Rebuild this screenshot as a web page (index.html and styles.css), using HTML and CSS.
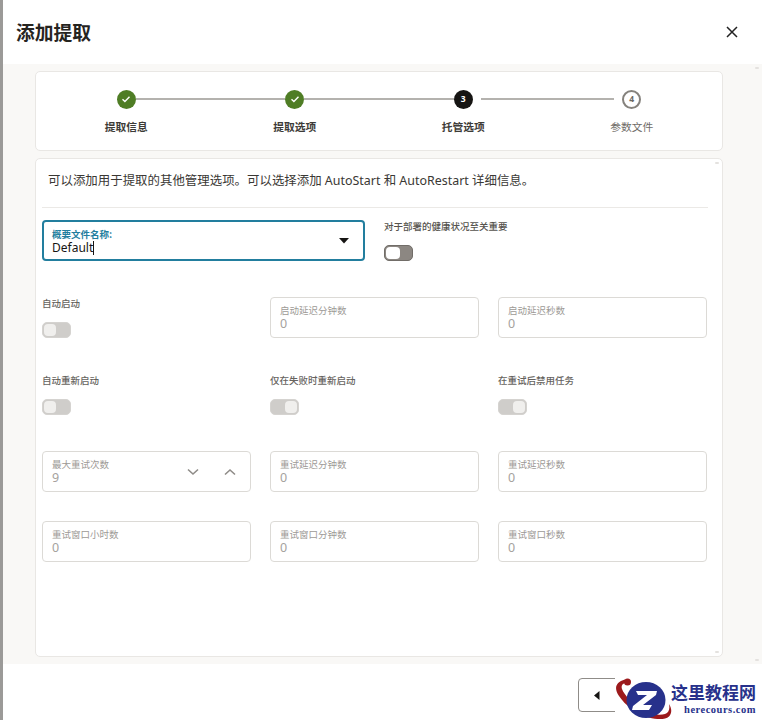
FILE: index.html
```html
<!DOCTYPE html>
<html lang="zh-CN">
<head>
<meta charset="utf-8">
<title>添加提取</title>
<link rel="stylesheet" href="styles.css">
</head>
<body>
<div class="shell">
  <div class="edge"></div>
  <div class="dialog">
    <header class="head">
      <h1 class="title">添加提取</h1>
      <svg class="close" width="12" height="12" viewBox="0 0 12 12"><path d="M1 1l10 10M11 1L1 11" stroke="#222" stroke-width="1.5" fill="none"/></svg>
    </header>
    <main class="body">
      <section class="card steps">
        <div class="step">
          <div class="track"><span class="bar-hidden"></span><span class="dot done"><svg width="10" height="10" viewBox="0 0 10 10"><path d="M1.5 5.2l2.4 2.3 4.6-4.7" stroke="#fff" stroke-width="1.4" fill="none"/></svg></span><span class="bar"></span></div>
          <div class="step-label">提取信息</div>
        </div>
        <div class="step">
          <div class="track"><span class="bar"></span><span class="dot done"><svg width="10" height="10" viewBox="0 0 10 10"><path d="M1.5 5.2l2.4 2.3 4.6-4.7" stroke="#fff" stroke-width="1.4" fill="none"/></svg></span><span class="bar"></span></div>
          <div class="step-label">提取选项</div>
        </div>
        <div class="step">
          <div class="track"><span class="bar"></span><span class="dot current">3</span><span class="bar gap-left"></span></div>
          <div class="step-label">托管选项</div>
        </div>
        <div class="step">
          <div class="track"><span class="bar gap-right"></span><span class="dot todo">4</span><span class="bar-hidden"></span></div>
          <div class="step-label muted">参数文件</div>
        </div>
      </section>
      <section class="card form">
        <span class="tick tick-top"></span>
        <span class="tick tick-bottom"></span>
        <p class="intro">可以添加用于提取的其他管理选项。可以选择添加 AutoStart 和 AutoRestart 详细信息。</p>
        <div class="rule"></div>
        <div class="grid-two">
          <div class="field focus">
            <div class="field-text">
              <span class="field-label">概要文件名称:</span>
              <span class="field-value"><span>Default</span><i class="caret"></i></span>
            </div>
            <svg class="arrow" width="10" height="6" viewBox="0 0 10 6"><path d="M0 0h10L5 5.5z" fill="#161513"/></svg>
          </div>
          <div class="switch-field">
            <span class="switch-label strong">对于部署的健康状况至关重要</span>
            <span class="toggle active"><span class="knob"></span></span>
          </div>
        </div>
        <div class="grid-three row-auto">
          <div class="switch-field">
            <span class="switch-label">自动启动</span>
            <span class="toggle off"><span class="knob"></span></span>
          </div>
          <div class="field"><div class="field-text"><span class="field-label">启动延迟分钟数</span><span class="field-value">0</span></div></div>
          <div class="field"><div class="field-text"><span class="field-label">启动延迟秒数</span><span class="field-value">0</span></div></div>
        </div>
        <div class="grid-three row-restart">
          <div class="switch-field">
            <span class="switch-label">自动重新启动</span>
            <span class="toggle off"><span class="knob"></span></span>
          </div>
          <div class="switch-field">
            <span class="switch-label">仅在失败时重新启动</span>
            <span class="toggle on"><span class="knob"></span></span>
          </div>
          <div class="switch-field">
            <span class="switch-label">在重试后禁用任务</span>
            <span class="toggle on"><span class="knob"></span></span>
          </div>
        </div>
        <div class="grid-three row-retry">
          <div class="field">
            <div class="field-text"><span class="field-label">最大重试次数</span><span class="field-value">9</span></div>
            <div class="spin">
              <svg width="12" height="8" viewBox="0 0 12 8"><path d="M1 1.5l5 4.5 5-4.5" stroke="#8f8c88" stroke-width="1.6" fill="none"/></svg>
              <svg width="12" height="8" viewBox="0 0 12 8"><path d="M1 6.5l5-4.5 5 4.5" stroke="#8f8c88" stroke-width="1.6" fill="none"/></svg>
            </div>
          </div>
          <div class="field"><div class="field-text"><span class="field-label">重试延迟分钟数</span><span class="field-value">0</span></div></div>
          <div class="field"><div class="field-text"><span class="field-label">重试延迟秒数</span><span class="field-value">0</span></div></div>
        </div>
        <div class="grid-three row-window">
          <div class="field"><div class="field-text"><span class="field-label">重试窗口小时数</span><span class="field-value">0</span></div></div>
          <div class="field"><div class="field-text"><span class="field-label">重试窗口分钟数</span><span class="field-value">0</span></div></div>
          <div class="field"><div class="field-text"><span class="field-label">重试窗口秒数</span><span class="field-value">0</span></div></div>
        </div>
      </section>
      <span class="tick page-top"></span>
      <span class="tick page-bottom"></span>
    </main>
    <footer class="foot">
      <button class="back" type="button"><svg width="6" height="9" viewBox="0 0 6 9"><path d="M5.5 0v9L0 4.5z" fill="#161513"/></svg></button>
    </footer>
    <div class="mark">
      <svg class="mark-logo" width="59" height="42" viewBox="0 0 59 42">
        <path d="M10 1.500C0 4-1 11 4 18c6 9 17 18 30 21.500 8 2 16 2.500 20-1 3-3 3-8 0-12.500 1 5 0 8.500-4 10-6 2-15 0-23-4C19 27 9 17 7 11c-1-3 0-5 3-6z" fill="#9c1a1c"/>
        <circle cx="12.500" cy="4" r="3.500" fill="#9c1a1c"/>
        <ellipse cx="31" cy="22" rx="19.500" ry="18" fill="#27318b"/>
        <path d="M21 13h21l-1 4-13 10h9l-3 5H17l1-4 14-11h-9z" fill="#fff"/>
      </svg>
      <div class="mark-text">
        <span class="mark-cn">这里教程网</span>
        <span class="mark-en">herecours.com</span>
      </div>
    </div>
  </div>
</div>
</body>
</html>
```
FILE: styles.css
```css
* { box-sizing: border-box; }
html, body { margin: 0; height: 100%; }
body {
  font-family: "Noto Sans", "Noto Sans CJK SC", sans-serif;
  color: #161513;
  background: #fff;
  overflow: hidden;
}
.shell { display: flex; width: 762px; height: 720px; }
.edge { width: 3px; background: #9b9a98; flex: none; }
.dialog {
  position: relative;
  flex: 1;
  display: flex;
  flex-direction: column;
  background: #fff;
  overflow: hidden;
}
.head {
  height: 64px;
  flex: none;
  display: flex;
  align-items: center;
  justify-content: space-between;
  padding: 0 24px 0 13px;
}
.title {
  margin: 0;
  font-family: "Noto Sans CJK SC", sans-serif;
  font-size: 18.75px;
  font-weight: 700;
  line-height: 26px;
  color: #26241f;
}
.close { display: block; margin-top: -1px; }
.body {
  position: relative;
  height: 600px;
  flex: none;
  background: #f9f8f6;
  padding: 7px 39px 0 32px;
  display: flex;
  flex-direction: column;
  gap: 7px;
}
.card {
  background: #fff;
  border: 1px solid #e9e7e4;
  border-radius: 5px;
  width: 688px;
}
.steps {
  height: 80px;
  flex: none;
  display: grid;
  grid-template-columns: repeat(4, 1fr);
  padding: 17px 6px 0 6px;
}
.step { display: flex; flex-direction: column; align-items: center; }
.track { width: 100%; display: flex; align-items: center; height: 20px; }
.bar, .bar-hidden { flex: 1 1 0; height: 2px; }
.bar { background: #b4b2ae; }
.gap-left { background: linear-gradient(90deg, transparent 8px, #b4b2ae 8px); }
.gap-right { background: linear-gradient(270deg, transparent 8px, #b4b2ae 8px); }
.dot {
  width: 19px;
  height: 19px;
  flex: none;
  border-radius: 50%;
  display: flex;
  align-items: center;
  justify-content: center;
  font-size: 8.5px;
  font-weight: 700;
  line-height: 1;
}
.done { background: #4f7d25; }
.current { background: #161513; color: #fff; }
.todo { border: 2px solid #85827d; color: #6b6863; background: #fff; }
.step-label {
  margin-top: 10px;
  font-family: "Noto Sans CJK SC", sans-serif;
  font-size: 10.75px;
  font-weight: 700;
  line-height: 16px;
  color: #3d3b37;
}
.muted { color: #6f6c67; font-weight: 400; }
.form {
  position: relative;
  height: 499px;
  flex: none;
  padding: 13px 14px 0 6px;
}
.intro {
  margin: 0 0 0 6px;
  height: 21px;
  font-size: 12.45px;
  line-height: 18px;
  color: #3a3834;
  white-space: nowrap;
}
.rule { height: 1px; background: #ebe9e6; margin-top: 14px; margin-bottom: 12px; }
.grid-two { display: grid; grid-template-columns: 323px 323px; column-gap: 19px; }
.grid-three { display: grid; grid-template-columns: 209px 209px 209px; column-gap: 19px; }
.row-auto { margin-top: 36px; }
.row-restart { margin-top: 36px; }
.row-retry { margin-top: 36px; }
.row-window { margin-top: 29px; }
.field {
  height: 41px;
  border: 1px solid #dcdad6;
  border-radius: 4px;
  display: flex;
  align-items: center;
  justify-content: space-between;
  padding: 0 9px;
  background: #fff;
}
.field-text { display: flex; flex-direction: column; }
.field-label {
  font-family: "Noto Sans CJK SC", sans-serif;
  font-size: 9.5px;
  line-height: 13px;
  color: #9d9a96;
  height: 13px;
}
.field-value {
  font-size: 12.5px;
  line-height: 14px;
  height: 14px;
  color: #a5a29e;
  display: flex;
  align-items: center;
}
.focus {
  border: 2px solid #227e9e;
  height: 41px;
  padding: 0 8px;
}
.focus .field-text { margin-top: 2px; }
.focus .field-label { color: #227e9e; font-weight: 700; }
.focus .field-value { color: #161513; font-size: 12px; }
.caret { display: inline-block; width: 1px; height: 14px; background: #161513; }
.arrow { margin-right: 6px; }
.switch-field { display: flex; flex-direction: column; align-items: flex-start; }
.switch-label {
  font-family: "Noto Sans CJK SC", sans-serif;
  font-size: 9.5px;
  font-weight: 500;
  line-height: 12px;
  color: #66635e;
}
.strong { color: #55524d; }
.toggle {
  width: 29px;
  height: 16px;
  margin-top: 13px;
  border-radius: 5px;
  display: flex;
  padding: 1px;
  border: 1px solid #d5d3d0;
  background: #cfcdca;
}
.knob { width: 12px; height: 100%; border-radius: 4px; background: #f0efed; }
.on { justify-content: flex-end; }
.active { background: #8c8782; border-color: #716d68; }
.active .knob { background: #fff; width: 14px; }
.spin { display: flex; gap: 25px; margin-right: 5px; }
.tick { position: absolute; width: 4px; height: 2px; background: #e4e2df; border-radius: 1px; }
.tick-top { right: 3px; top: 3px; }
.tick-bottom { right: 3px; bottom: 3px; }
.page-top { right: 3px; top: 3px; }
.page-bottom { right: 3px; bottom: 3px; }
.foot {
  flex: 1;
  display: flex;
  justify-content: flex-end;
  padding: 14px 0 0 0;
  background: #fff;
}
.back {
  width: 80px;
  height: 34px;
  margin-right: 104px;
  border: 1px solid #8f8c88;
  border-radius: 4px;
  background: #fff;
  padding: 0;
  display: flex;
  align-items: center;
  justify-content: flex-start;
}
.back svg { margin-left: 15px; }
.mark {
  position: absolute;
  left: 612px;
  top: 678px;
  width: 147px;
  height: 42px;
  background: #fff;
  display: flex;
  align-items: center;
}
.mark-logo { flex: none; display: block; margin-right: -3px; }
.mark-text { display: flex; flex-direction: column; align-items: flex-end; margin-top: -4px; }
.mark-cn {
  font-family: "Noto Sans CJK SC", sans-serif;
  font-weight: 700;
  font-size: 17px;
  line-height: 25px;
  color: #27318b;
  white-space: nowrap;
}
.mark-en {
  font-family: "Liberation Serif", serif;
  font-weight: 700;
  font-size: 10.5px;
  line-height: 12px;
  letter-spacing: 0.5px;
  color: #27318b;
  white-space: nowrap;
}
```
